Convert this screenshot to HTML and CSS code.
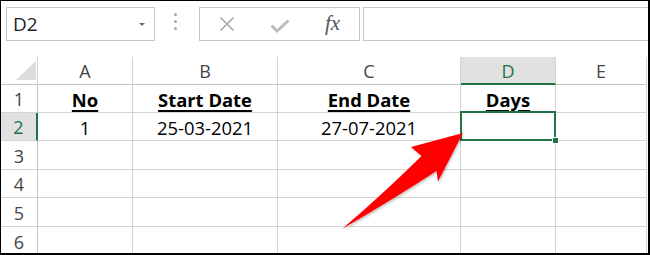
FILE: index.html
```html
<!DOCTYPE html>
<html>
<head>
<meta charset="utf-8">
<link rel="stylesheet" href="styles.css">
</head>
<body>
<div class="frame">
  <div class="toolbar">
    <div class="namebox"><span class="ref">D2</span><span class="caret"></span></div>
    <div class="dots"><span></span><span></span><span></span></div>
    <div class="fbtns">
      <span class="btn"><svg width="16" height="16" viewBox="0 0 16 16"><path d="M1.5 1.5 L14.5 14.5 M14.5 1.5 L1.5 14.5" stroke="#a8a8a8" stroke-width="1.6" fill="none"/></svg></span>
      <span class="btn btn-check"><svg width="20" height="14" viewBox="0 0 20 14"><path d="M1.5 6.5 L7 12 L18.5 1.5" stroke="#bcbcbc" stroke-width="3" fill="none"/></svg></span>
      <span class="btn fx">fx</span>
    </div>
    <div class="fbar"></div>
  </div>
  <div class="sheet">
    <div class="ch corner"></div>
    <div class="ch">A</div>
    <div class="ch">B</div>
    <div class="ch">C</div>
    <div class="ch sel">D</div>
    <div class="ch">E</div>

    <div class="rh">1</div>
    <div class="c b"><span>No</span></div>
    <div class="c b"><span>Start Date</span></div>
    <div class="c b"><span>End Date</span></div>
    <div class="c b"><span>Days</span></div>
    <div class="c"></div>

    <div class="rh sel">2</div>
    <div class="c">1</div>
    <div class="c">25-03-2021</div>
    <div class="c">27-07-2021</div>
    <div class="c active"></div>
    <div class="c"></div>

    <div class="rh">3</div><div class="c"></div><div class="c"></div><div class="c"></div><div class="c"></div><div class="c"></div>
    <div class="rh">4</div><div class="c"></div><div class="c"></div><div class="c"></div><div class="c"></div><div class="c"></div>
    <div class="rh">5</div><div class="c"></div><div class="c"></div><div class="c"></div><div class="c"></div><div class="c"></div>
    <div class="rh">6</div><div class="c"></div><div class="c"></div><div class="c"></div><div class="c"></div><div class="c"></div>
  </div>
  <svg class="arrow" width="650" height="255" viewBox="0 0 650 255">
    <defs>
      <filter id="sh" x="-20%" y="-20%" width="140%" height="140%">
        <feDropShadow dx="1" dy="1.5" stdDeviation="1.2" flood-color="#000" flood-opacity="0.25"/>
      </filter>
    </defs>
    <path d="M463 133 L411 147 L421.5 156 Q383 194 342 229 Q392 200 436.5 171 L438 181.5 Z" fill="#fe0000" filter="url(#sh)"/>
  </svg>
</div>
</body>
</html>
```
FILE: styles.css
```css
html, body {
  margin: 0;
  padding: 0;
}
body {
  width: 650px;
  height: 255px;
  overflow: hidden;
  background: #000;
}
.frame {
  position: relative;
  box-sizing: border-box;
  width: 650px;
  height: 255px;
  border: solid #000;
  border-width: 1px 2px 2px 1px;
  background: #fff;
  overflow: hidden;
  font-family: "Open Sans", "Noto Sans", sans-serif;
}
.toolbar {
  display: flex;
  height: 34px;
  padding: 6px 0 0 5px;
}
.namebox {
  box-sizing: border-box;
  width: 149px;
  border: 1px solid #c6c6c6;
  display: flex;
  align-items: center;
  justify-content: space-between;
  padding: 0 9px 0 6px;
  font-size: 19px;
  color: #1e1e1e;
}
.caret {
  width: 0;
  height: 0;
  border-left: 3px solid transparent;
  border-right: 3px solid transparent;
  border-top: 3px solid #6a6a6a;
}
.dots {
  box-sizing: border-box;
  width: 44px;
  padding: 0 4px 5px 0;
  display: flex;
  flex-direction: column;
  align-items: center;
  justify-content: center;
  gap: 4px;
}
.dots span {
  width: 3px;
  height: 3px;
  border-radius: 50%;
  background: #a4a4a4;
}
.fbtns {
  box-sizing: border-box;
  width: 161px;
  border: 1px solid #c6c6c6;
  display: flex;
}
.btn {
  width: 53px;
  display: flex;
  align-items: center;
  justify-content: center;
}
.btn-check {
  padding-top: 3px;
}
.fx {
  font-family: "Liberation Serif", serif;
  font-style: italic;
  font-size: 21px;
  color: #555;
  padding-bottom: 2px;
}
.fbar {
  flex: 1;
  margin-left: 3px;
  margin-right: -6px;
  border: 1px solid #c6c6c6;
}
.sheet {
  margin-top: 16px;
  display: grid;
  grid-template-columns: 37px 95px 145px 183px 95px 91px;
  grid-template-rows: 28px 28px 28px 29px 28px 29px 29px;
}
.sheet > div {
  box-sizing: border-box;
  border-right: 1px solid #d4d4d4;
  border-bottom: 1px solid #d4d4d4;
  display: flex;
  align-items: center;
  justify-content: center;
}
.sheet > .ch {
  font-size: 18px;
  color: #444;
  border-bottom-color: #c4c4c4;
  padding-top: 1px;
}
.sheet > .rh {
  font-size: 18px;
  color: #444;
  border-right-color: #c4c4c4;
  padding-top: 1px;
}
.sheet > .ch.sel {
  background: #e1e1e1;
  color: #217346;
  border-bottom: 2px solid #217346;
}
.sheet > .rh.sel {
  background: #e1e1e1;
  color: #217346;
  border-right: 2px solid #217346;
}
.corner {
  position: relative;
}
.corner::after {
  content: "";
  position: absolute;
  right: 1px;
  bottom: 4px;
  width: 0;
  height: 0;
  border-left: 20px solid transparent;
  border-bottom: 19px solid #dcdcdc;
}
.c {
  font-size: 18.4px;
  color: #000;
  padding-top: 1px;
}
.b span {
  font-weight: 700;
  text-decoration: underline;
  text-decoration-thickness: 1.6px;
  text-underline-offset: 3px;
}
.active {
  position: relative;
}
.active::after {
  content: "";
  position: absolute;
  top: -2px;
  left: -1px;
  right: -1px;
  bottom: -1px;
  border: 2px solid #217346;
}
.active::before {
  content: "";
  position: absolute;
  right: -4px;
  bottom: -4px;
  width: 5px;
  height: 5px;
  background: #217346;
  border: 1px solid #fff;
  z-index: 1;
}
.arrow {
  position: absolute;
  top: -1px;
  left: -1px;
  pointer-events: none;
}
```
